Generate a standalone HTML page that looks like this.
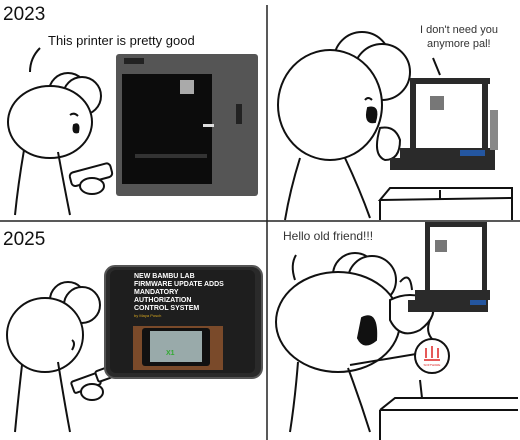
<!DOCTYPE html>
<html><head><style>
html,body{margin:0;padding:0;background:#fff;width:520px;height:440px;overflow:hidden}
svg{display:block}
text{font-family:"Liberation Sans",sans-serif}
</style></head><body>
<svg width="520" height="440" viewBox="0 0 520 440" xmlns="http://www.w3.org/2000/svg">
<rect width="520" height="440" fill="#fff"/>
<line x1="267" y1="5" x2="267" y2="440" stroke="#222" stroke-width="1.5"/>
<line x1="0" y1="221" x2="520" y2="221" stroke="#222" stroke-width="1.5"/>

<g fill="none" stroke="#111" stroke-width="2">
<!-- Panel 1 character -->
<circle cx="68" cy="92" r="19" fill="#fff"/>
<circle cx="82" cy="96" r="19" fill="#fff"/>
<ellipse cx="50" cy="122" rx="42" ry="36" fill="#fff"/>
<path d="M24 150 Q18 185 15 215"/><path d="M58 152 Q64 185 70 215"/>
<path d="M40 48 Q30 58 30 72"/>
<path d="M70 115 Q74 112 78 116"/>
<path d="M74 125 Q80 122 78 132 Q72 134 74 125Z" fill="#111"/>
<rect x="70" y="168" width="42" height="14" rx="4" fill="#fff" transform="rotate(-15 90 175)"/>
<ellipse cx="92" cy="186" rx="12" ry="8" fill="#fff"/>
<!-- Panel 2 character -->
<circle cx="362" cy="60" r="28" fill="#fff"/>
<circle cx="382" cy="72" r="28" fill="#fff"/>
<ellipse cx="330" cy="105" rx="52" ry="55" fill="#fff"/>
<path d="M300 158 Q290 190 285 220"/><path d="M345 158 Q360 190 370 218"/>
<path d="M365 100 Q368 96 372 100"/>
<path d="M368 108 Q380 105 375 122 Q364 124 368 108Z" fill="#111"/>
<path d="M380 128 Q395 125 400 140 Q400 160 385 160 Q372 155 380 128Z" fill="#fff"/>
<path d="M433 58 L440 75"/>
<!-- Table 2 -->
<path d="M380 200 L390 188 L512 188 L512 198 L380 200Z" fill="#fff"/>
<path d="M380 200 L380 220 M512 198 L512 220 M440 190 L440 200"/>
<!-- Panel 3 character -->
<circle cx="68" cy="300" r="18" fill="#fff"/>
<circle cx="82" cy="305" r="18" fill="#fff"/>
<ellipse cx="45" cy="335" rx="38" ry="37" fill="#fff"/>
<path d="M22 365 Q18 400 15 432"/><path d="M58 362 Q64 400 70 432"/>
<path d="M72 340 Q76 343 72 350"/>
<rect x="72" y="377" width="28" height="12" rx="2" fill="#fff" transform="rotate(-20 86 383)"/>
<rect x="96" y="368" width="20" height="11" rx="2" fill="#fff" transform="rotate(-20 106 373)"/>
<ellipse cx="92" cy="392" rx="11" ry="8" fill="#fff"/>
<!-- Panel 4 character -->
<circle cx="355" cy="275" r="22" fill="#fff"/>
<circle cx="372" cy="280" r="24" fill="#fff"/>
<ellipse cx="338" cy="322" rx="62" ry="50" fill="#fff"/>
<path d="M298 362 Q295 400 290 432"/><path d="M348 368 Q360 400 370 432"/>
<path d="M296 255 Q290 265 295 280"/>
<path d="M362 318 Q378 310 376 340 Q364 350 358 338Z" fill="#111"/>
<path d="M390 300 Q410 290 430 300 Q440 315 420 330 Q400 340 390 320Z" fill="#fff"/>
<path d="M350 365 L440 350"/>
<path d="M400 282 Q410 270 412 290"/>
<path d="M430 320 Q425 332 433 340"/>
<path d="M380 410 L395 398 L518 398 M380 410 L518 410 M380 410 L380 440 M420 380 L422 398"/>
</g>

<!-- Text -->
<text x="3" y="20" font-size="19" fill="#111">2023</text>
<text x="48" y="45" font-size="13" fill="#111">This printer is pretty good</text>
<text x="420" y="33" font-size="11" fill="#333" font-family="Liberation Mono,monospace">I don't need you</text>
<text x="427" y="47" font-size="11" fill="#333" font-family="Liberation Mono,monospace">anymore pal!</text>
<text x="3" y="245" font-size="19" fill="#111">2025</text>
<text x="283" y="240" font-size="12" fill="#333" font-family="Liberation Mono,monospace">Hello old friend!!!</text>

<!-- Panel 1 printer -->
<rect x="116" y="54" width="142" height="142" rx="3" fill="#555"/>
<rect x="122" y="74" width="90" height="110" fill="#0c0c0c"/>
<rect x="124" y="58" width="20" height="6" fill="#222"/>
<rect x="180" y="80" width="14" height="14" fill="#aaa"/>
<rect x="135" y="154" width="72" height="4" fill="#333"/>
<rect x="203" y="124" width="11" height="3" fill="#ddd"/>
<rect x="236" y="104" width="6" height="20" fill="#222"/>

<!-- Panel 2 Ender -->
<g fill="#2a2a2a">
<rect x="410" y="78" width="80" height="6"/>
<rect x="410" y="78" width="6" height="80"/>
<rect x="482" y="78" width="6" height="90"/>
<rect x="400" y="148" width="95" height="10"/>
<rect x="390" y="158" width="105" height="12"/>
<rect x="430" y="96" width="14" height="14" fill="#777"/>
<rect x="490" y="110" width="8" height="40" fill="#888"/>
<rect x="460" y="150" width="25" height="6" fill="#2456a0"/>
</g>

<!-- Panel 3 tablet -->
<rect x="105" y="266" width="157" height="112" rx="10" fill="#2a2a2a" stroke="#555" stroke-width="2"/>
<rect x="110" y="270" width="145" height="103" rx="6" fill="#1e1e1e"/>
<g fill="#fff" font-size="7" font-weight="bold">
<text x="134" y="278">NEW BAMBU LAB</text>
<text x="134" y="286">FIRMWARE UPDATE ADDS</text>
<text x="134" y="294">MANDATORY</text>
<text x="134" y="302">AUTHORIZATION</text>
<text x="134" y="310">CONTROL SYSTEM</text>
</g>
<text x="134" y="317" font-size="4" fill="#d4a520">by Maya Posch</text>
<rect x="133" y="326" width="90" height="44" fill="#7a4a2a"/>
<rect x="142" y="328" width="68" height="38" rx="3" fill="#111"/>
<rect x="150" y="331" width="52" height="31" fill="#9aa"/>
<text x="166" y="355" font-size="7" fill="#3a3" font-weight="bold">X1</text>

<!-- Panel 4 Ender -->
<g fill="#2a2a2a">
<rect x="425" y="222" width="62" height="5"/>
<rect x="425" y="222" width="5" height="70"/>
<rect x="482" y="222" width="5" height="78"/>
<rect x="415" y="290" width="75" height="10"/>
<rect x="408" y="300" width="80" height="12"/>
<rect x="435" y="240" width="12" height="12" fill="#777"/>
<rect x="470" y="300" width="16" height="5" fill="#2456a0"/>
</g>
<circle cx="432" cy="356" r="17" fill="#fff" stroke="#111" stroke-width="2"/>
<path d="M426 358 L426 348 M432 358 L432 346 M438 358 L438 348 M424 360 L440 360" stroke="#d22" stroke-width="1.5"/>
<text x="432" y="366" font-size="3" fill="#d22" text-anchor="middle">SOFTWARE</text>
</svg>
</body></html>
